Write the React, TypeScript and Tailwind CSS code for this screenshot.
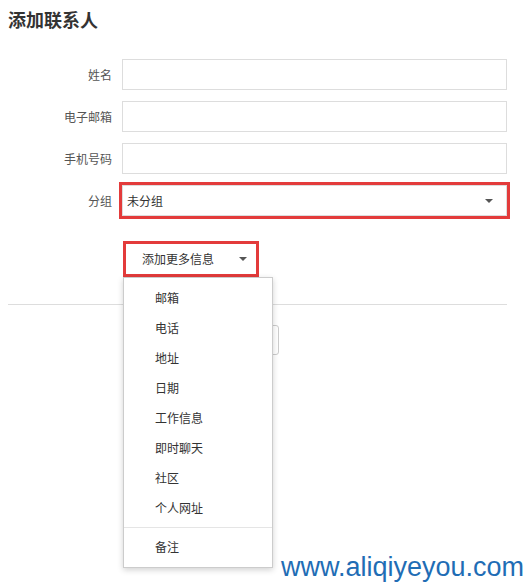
const fields = ['姓名', '电子邮箱', '手机号码']

const moreItems = ['邮箱', '电话', '地址', '日期', '工作信息', '即时聊天', '社区', '个人网址']

function Caret() {
  return (
    <svg width="8" height="4" viewBox="0 0 8 4" className="shrink-0">
      <path d="M0 0h8L4 4z" fill="#555" />
    </svg>
  )
}

export default function App() {
  return (
    <div
      className="relative h-[583px] w-[530px] overflow-hidden bg-white text-[12px] text-[#333]"
      style={{ fontFamily: '"Microsoft YaHei", "Noto Sans CJK SC", sans-serif' }}
    >
      <h1 className="pl-2 pt-[7px] text-[18px] font-bold leading-[24px] text-[#333]">添加联系人</h1>

      <div className="mt-[28px] flex w-[507px] flex-col gap-[11px]">
        {fields.map((label) => (
          <div key={label} className="flex h-[31px] items-center">
            <label className="w-[112px] shrink-0 text-right text-[#555]">{label}</label>
            <input className="ml-[10px] h-full flex-1 border border-[#ddd] px-1 outline-none" />
          </div>
        ))}

        <div className="flex h-[31px] items-center">
          <label className="w-[112px] shrink-0 text-right text-[#555]">分组</label>
          <div className="ml-[10px] flex h-full flex-1 items-center justify-between border border-[#ddd] pl-1 pr-[13px] outline-[3px] outline-[#e33b3b]">
            <span>未分组</span>
            <Caret />
          </div>
        </div>
      </div>

      <div className="relative ml-[123px] mt-[25px] w-[136px]">
        <button className="flex h-[36px] w-full items-center gap-[25px] border-[3px] border-[#e33b3b] bg-white pl-4 text-[12px] text-[#333]">
          <span>添加更多信息</span>
          <Caret />
        </button>

        <div className="absolute left-0 top-full z-10 w-[150px] border border-[#ccc] bg-white py-[5px] shadow-[0_2px_6px_rgba(0,0,0,0.18)]">
          {moreItems.map((item) => (
            <div key={item} className="flex h-[30px] items-center pl-[31px]">
              {item}
            </div>
          ))}
          <div className="my-1 h-px bg-[#e5e5e5]" />
          <div className="flex h-[30px] items-center pl-[31px]">备注</div>
        </div>
      </div>

      <div className="ml-2 mt-[27px] h-px w-[499px] bg-[#ddd]" />

      {/* footer button, mostly covered by the open menu */}
      <div className="ml-[202px] mt-[20px] flex">
        <button aria-label="取消" className="h-[30px] w-[77px] rounded-[3px] border border-[#ccc] bg-white" />
      </div>

      <div
        className="absolute bottom-[2px] right-[6px] text-[27px] leading-none text-[#1f6db5]"
        style={{ fontFamily: '"Liberation Sans", Arial, sans-serif' }}
      >
        www.aliqiyeyou.com
      </div>
    </div>
  )
}
